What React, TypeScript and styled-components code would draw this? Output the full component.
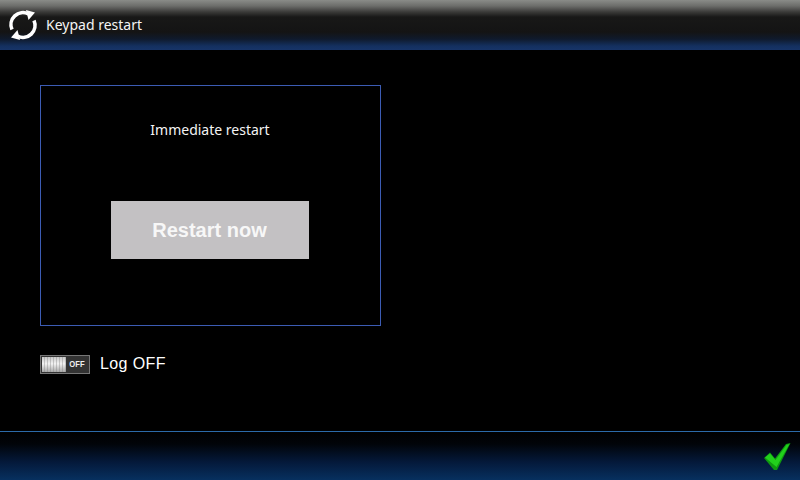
import React from 'react';
import styled, { createGlobalStyle } from 'styled-components';

const GlobalStyle = createGlobalStyle`
  html, body {
    margin: 0;
    padding: 0;
    background: #000;
  }
`;

const Screen = styled.div`
  width: 800px;
  height: 480px;
  display: flex;
  flex-direction: column;
  background: #000;
  overflow: hidden;
  font-family: 'Noto Sans', sans-serif;
  color: #fff;
`;

const Header = styled.header`
  height: 50px;
  box-sizing: border-box;
  padding-left: 7px;
  display: flex;
  align-items: center;
  gap: 7px;
  background: linear-gradient(
    to bottom,
    #8a8c88 0px,
    #6c6d6a 6px,
    #3a3a38 12px,
    #181817 17px,
    #141414 32px,
    #0f1a2c 39px,
    #14305f 46px,
    #173468 50px
  );
`;

const HeaderTitle = styled.span`
  font-size: 14px;
  color: #f4f4f4;
  line-height: 20px;
`;

const Content = styled.main`
  flex: 1;
  padding: 35px 0 0 40px;
  display: flex;
  flex-direction: column;
  align-items: flex-start;
`;

const Panel = styled.section`
  width: 341px;
  height: 241px;
  box-sizing: border-box;
  border: 1px solid #3c5cb4;
  padding-top: 34px;
  display: flex;
  flex-direction: column;
  align-items: center;
`;

const PanelLabel = styled.div`
  font-size: 14px;
  line-height: 20px;
  color: #f4f4f4;
  margin-left: -1px;
`;

const RestartButton = styled.button`
  margin-top: 61px;
  margin-left: -2px;
  width: 198px;
  height: 58px;
  border: none;
  padding: 0;
  background: #c3c1c3;
  color: #f7f7f7;
  font-family: 'Liberation Sans', sans-serif;
  font-weight: 700;
  font-size: 20px;
`;

const ToggleRow = styled.div`
  margin-top: 28px;
  display: flex;
  align-items: center;
  gap: 10px;
`;

const Toggle = styled.div`
  width: 50px;
  height: 19px;
  box-sizing: border-box;
  border: 1px solid #777;
  padding: 1px;
  background: #333;
  display: flex;
`;

const ToggleKnob = styled.div`
  width: 24px;
  background:
    repeating-linear-gradient(to right, transparent 0 2px, rgba(120, 120, 120, 0.35) 2px 3px),
    linear-gradient(to bottom, #c8c8c8, #f2f2f2 45%, #a8a8a8);
`;

const ToggleText = styled.span`
  flex: 1;
  text-align: center;
  font-family: 'Liberation Sans', sans-serif;
  font-weight: 700;
  font-size: 9px;
  line-height: 15px;
  color: #f0f0f0;
  transform: scaleX(0.85);
`;

const ToggleLabel = styled.span`
  font-family: 'Liberation Sans', sans-serif;
  font-size: 16px;
  letter-spacing: 0.4px;
  line-height: 20px;
`;

const Footer = styled.footer`
  height: 49px;
  box-sizing: border-box;
  border-top: 1px solid #2c6aa8;
  display: flex;
  align-items: flex-end;
  justify-content: flex-end;
  padding: 0 9px 9px 0;
  background: linear-gradient(to bottom, #000 0px, #010409 12px, #04193a 30px, #07305f 48px);
`;

const RestartIcon = () => (
  <svg width="32" height="32" viewBox="0 0 32 32">
    <path d="M5 20.5 A12 12 0 0 1 21.5 5" fill="none" stroke="#fff" strokeWidth="3.6" />
    <path d="M27 11.5 A12 12 0 0 1 10.5 27" fill="none" stroke="#fff" strokeWidth="3.6" />
    <path d="M19 1 L28 3.5 L21.5 11 Z" fill="#fff" />
    <path d="M13 31 L4 28.5 L10.5 21 Z" fill="#fff" />
  </svg>
);

const CheckIcon = () => (
  <svg width="28" height="28" viewBox="0 0 28 28">
    <path d="M1 15 L7 9.5 L12 15.5 L23 1 L27.5 0 L14 27 L11 27 Z" fill="#0f9a10" />
    <path d="M2 14.5 L7 10.5 L12.5 17 L23.5 2 L26.5 1 L13.5 24 Z" fill="#22d01c" />
  </svg>
);

export default function App() {
  return (
    <Screen>
      <GlobalStyle />
      <Header>
        <RestartIcon />
        <HeaderTitle>Keypad restart</HeaderTitle>
      </Header>
      <Content>
        <Panel>
          <PanelLabel>Immediate restart</PanelLabel>
          <RestartButton>Restart now</RestartButton>
        </Panel>
        <ToggleRow>
          <Toggle>
            <ToggleKnob />
            <ToggleText>OFF</ToggleText>
          </Toggle>
          <ToggleLabel>Log OFF</ToggleLabel>
        </ToggleRow>
      </Content>
      <Footer>
        <CheckIcon />
      </Footer>
    </Screen>
  );
}
